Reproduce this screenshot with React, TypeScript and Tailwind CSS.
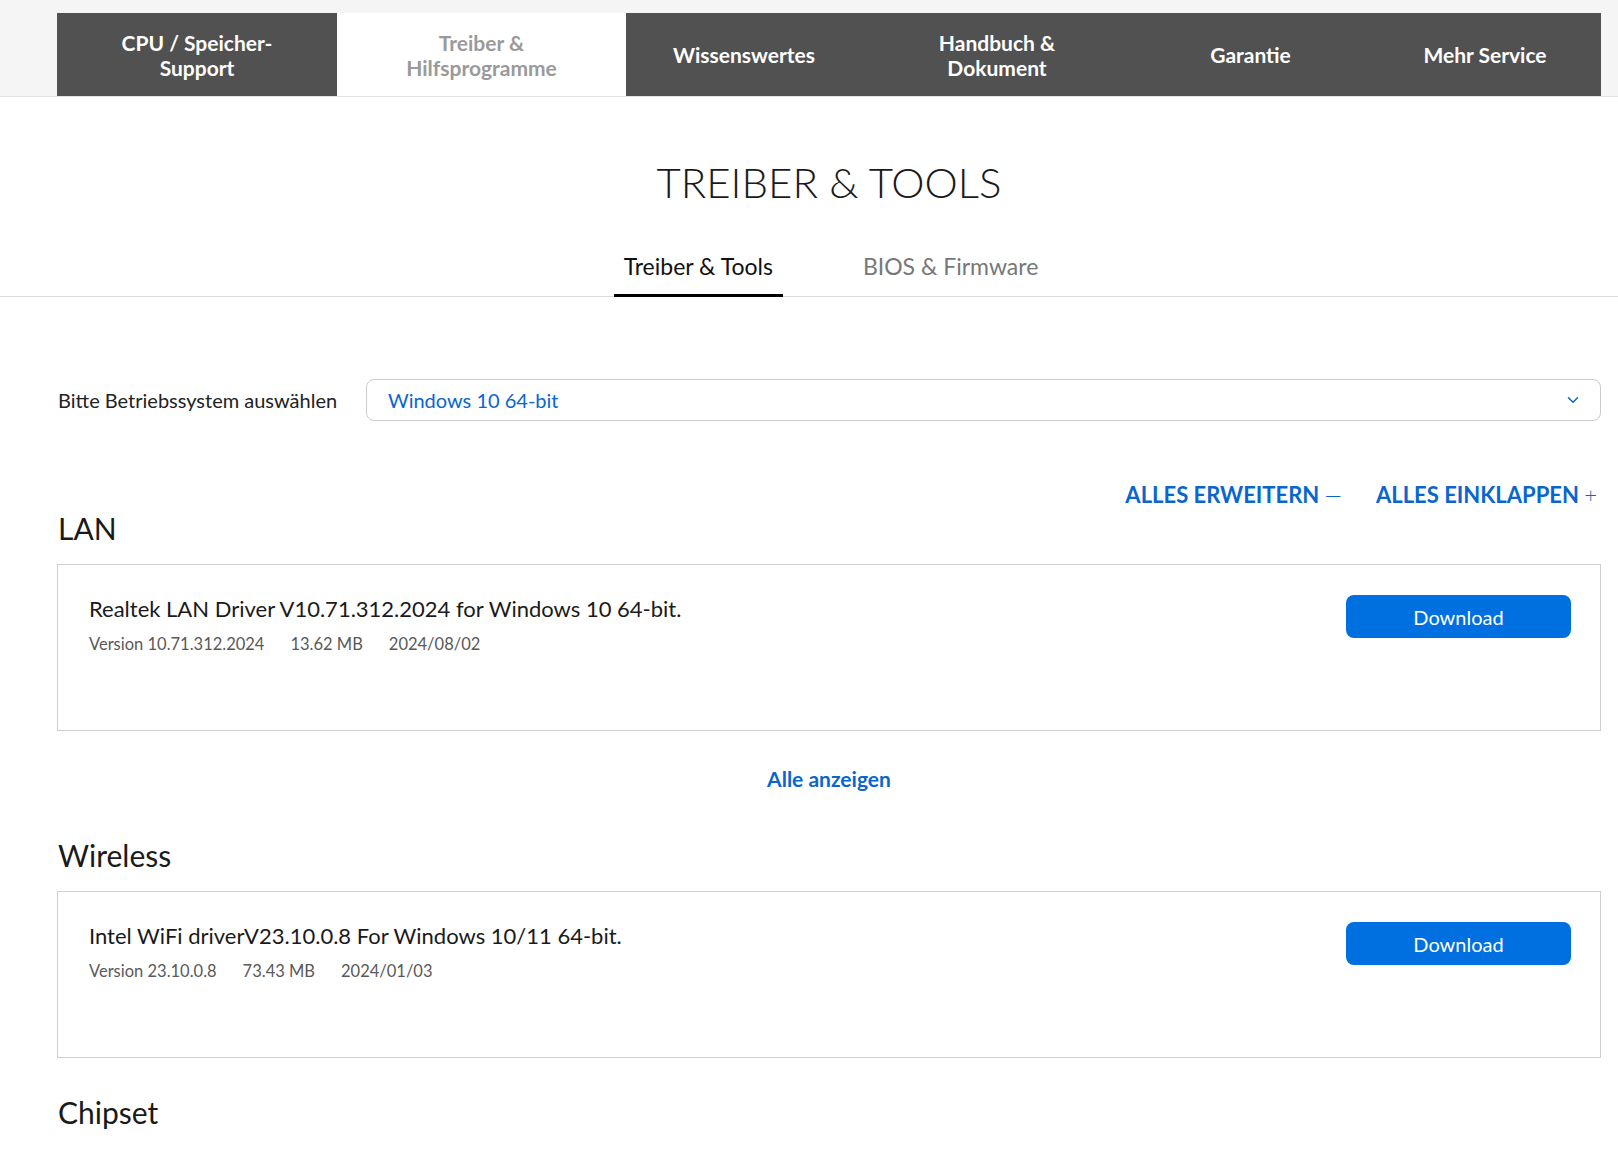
import { ChevronDown } from "lucide-react";

const navTabs = [
  { label: ["CPU / Speicher-", "Support"], w: "w-[280px]", active: false },
  { label: ["Treiber &", "Hilfsprogramme"], w: "w-[289px]", active: true },
  { label: ["Wissenswertes"], w: "w-[236px]", active: false },
  { label: ["Handbuch &", "Dokument"], w: "w-[270px]", active: false },
  { label: ["Garantie"], w: "w-[237px]", active: false },
  { label: ["Mehr Service"], w: "flex-1", active: false },
];

const sections = [
  {
    title: "LAN",
    name: "Realtek LAN Driver V10.71.312.2024 for Windows 10 64-bit.",
    version: "Version 10.71.312.2024",
    size: "13.62 MB",
    date: "2024/08/02",
    showAll: true,
  },
  {
    title: "Wireless",
    name: "Intel WiFi driverV23.10.0.8 For Windows 10/11 64-bit.",
    version: "Version 23.10.0.8",
    size: "73.43 MB",
    date: "2024/01/03",
    showAll: false,
  },
];

function DriverCard({ s }: { s: (typeof sections)[number] }) {
  return (
    <div className="h-[167px] border border-[#cfcfcf] flex justify-between pl-[31px] pr-[29px] pt-[30px]">
      <div>
        <p className="text-[22px] leading-[28px] text-[#1a1a1a]">{s.name}</p>
        <div className="mt-[10px] flex gap-[26px] text-[16.5px] leading-[22px] text-[#595959]">
          <span>{s.version}</span>
          <span>{s.size}</span>
          <span>{s.date}</span>
        </div>
      </div>
      <button className="h-[43px] w-[225px] rounded-[8px] bg-[#006fe0] text-white text-[20px]">
        Download
      </button>
    </div>
  );
}

export default function App() {
  return (
    <div className="min-h-screen bg-white font-['Lato',sans-serif]">
      {/* top nav */}
      <div className="bg-[#f5f5f5] border-b border-[#e2e2e2] pt-[13px] pl-[57px] pr-[17px]">
        <div className="flex h-[83px]">
          {navTabs.map((t, i) => (
            <div
              key={i}
              className={`${t.w} flex flex-col items-center justify-center text-[21px] leading-[25px] font-bold ${
                t.active ? "bg-white text-[#9a9a9a]" : "bg-[#515151] text-white"
              }`}
            >
              {t.label.map((l) => (
                <span key={l}>{l}</span>
              ))}
            </div>
          ))}
        </div>
      </div>

      {/* page title */}
      <h1 className="text-center text-[42px] leading-[56px] font-light text-[#1a1a1a] pt-[57px] pl-[40px]">
        TREIBER &amp; TOOLS
      </h1>

      {/* sub tabs */}
      <div className="mt-[42px] border-b border-[#dcdcdc] flex justify-center">
        <div className="flex gap-[70px] ml-[44px]">
          <div className="px-[10px] pb-[14px] border-b-[3px] border-black text-[23px] leading-[28px] text-[#111] -mb-px">
            Treiber &amp; Tools
          </div>
          <div className="px-[10px] pb-[14px] text-[23px] leading-[28px] text-[#777]">BIOS &amp; Firmware</div>
        </div>
      </div>

      <div className="pl-[57px] pr-[17px]">
        {/* os select */}
        <div className="mt-[82px] flex items-center">
          <span className="w-[309px] pl-[1px] text-[20px] text-[#222]">Bitte Betriebssystem auswählen</span>
          <div className="flex-1 h-[42px] rounded-[8px] border border-[#cccccc] flex items-center justify-between pl-[21px] pr-[18px]">
            <span className="text-[20px] text-[#0a66cc]">Windows 10 64-bit</span>
            <ChevronDown className="w-[18px] h-[18px] text-[#0a66cc]" strokeWidth={2} />
          </div>
        </div>

        {/* expand / collapse */}
        <div className="mt-[60px] flex justify-end gap-[34px] pr-[4px] text-[22px] leading-[28px] font-bold text-[#0a66cc]">
          <span>
            ALLES ERWEITERN <span className="font-light">—</span>
          </span>
          <span>
            ALLES EINKLAPPEN <span className="font-light">+</span>
          </span>
        </div>

        {sections.map((s) => (
          <div key={s.title}>
            <h2 className={`${s.showAll ? "mt-[1px]" : "mt-[0px]"} text-[30px] leading-[36px] text-[#1a1a1a] pl-[1px]`}>
              {s.title}
            </h2>
            <div className="mt-[18px]">
              <DriverCard s={s} />
            </div>
            {s.showAll && (
              <div className="pt-[36px] pb-[46px] text-center text-[21px] leading-[24px] font-bold text-[#0a66cc]">
                Alle anzeigen
              </div>
            )}
          </div>
        ))}

        <h2 className="mt-[36px] text-[30px] leading-[36px] text-[#1a1a1a] pl-[1px]">Chipset</h2>
        <div className="h-[60px]" />
      </div>
    </div>
  );
}
